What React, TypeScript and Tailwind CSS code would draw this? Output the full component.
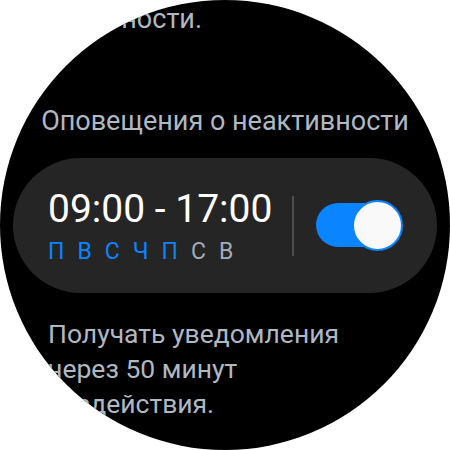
export default function App() {
  const days = [
    { d: "П", on: true },
    { d: "В", on: true },
    { d: "С", on: true },
    { d: "Ч", on: true },
    { d: "П", on: true },
    { d: "С", on: false },
    { d: "В", on: false },
  ];

  return (
    <div className="w-[450px] h-[450px] bg-white" style={{ fontFamily: "Roboto, 'Noto Sans', sans-serif" }}>
      <div className="w-[450px] h-[450px] rounded-full bg-black overflow-hidden flex flex-col">
        <p className="pt-[2px] pl-[48px] text-[27px] leading-[35px] text-[#b0b8c2]">активности.</p>

        <p className="mt-[67px] text-center text-[27px] leading-[35px] text-[#b0b8c2]">
          Оповещения о неактивности
        </p>

        <div className="mt-[19px] mx-[13px] h-[135px] rounded-full bg-[#252525] flex items-center pl-[35px] pr-[34px]">
          <div className="flex flex-col">
            <span className="text-[39px] leading-[48px] text-white">09:00 - 17:00</span>
            <div className="mt-[5px] flex gap-[13px] text-[23px] leading-[28px]">
              {days.map((x, i) => (
                <span key={i} className={x.on ? "text-[#0a84ff]" : "text-[#a3abb5]"}>
                  {x.d}
                </span>
              ))}
            </div>
          </div>

          <div className="ml-auto w-[2px] h-[60px] bg-[#4f4f4f]" />

          <div className="ml-[22px] relative w-[87px] h-[51px]">
            <div className="absolute left-0 top-[3px] w-[80px] h-[44px] rounded-full bg-[#0a84ff]" />
            <div className="absolute right-0 top-0 w-[51px] h-[51px] rounded-full bg-[#f9f9f9] border-2 border-[#0a84ff]" />
          </div>
        </div>

        <p className="mt-[23px] pl-[48px] text-[26.5px] leading-[35px] text-[#b0b8c2]">
          Получать уведомления
          <br />
          через 50 минут
          <br />
          бездействия.
        </p>
      </div>
    </div>
  );
}
